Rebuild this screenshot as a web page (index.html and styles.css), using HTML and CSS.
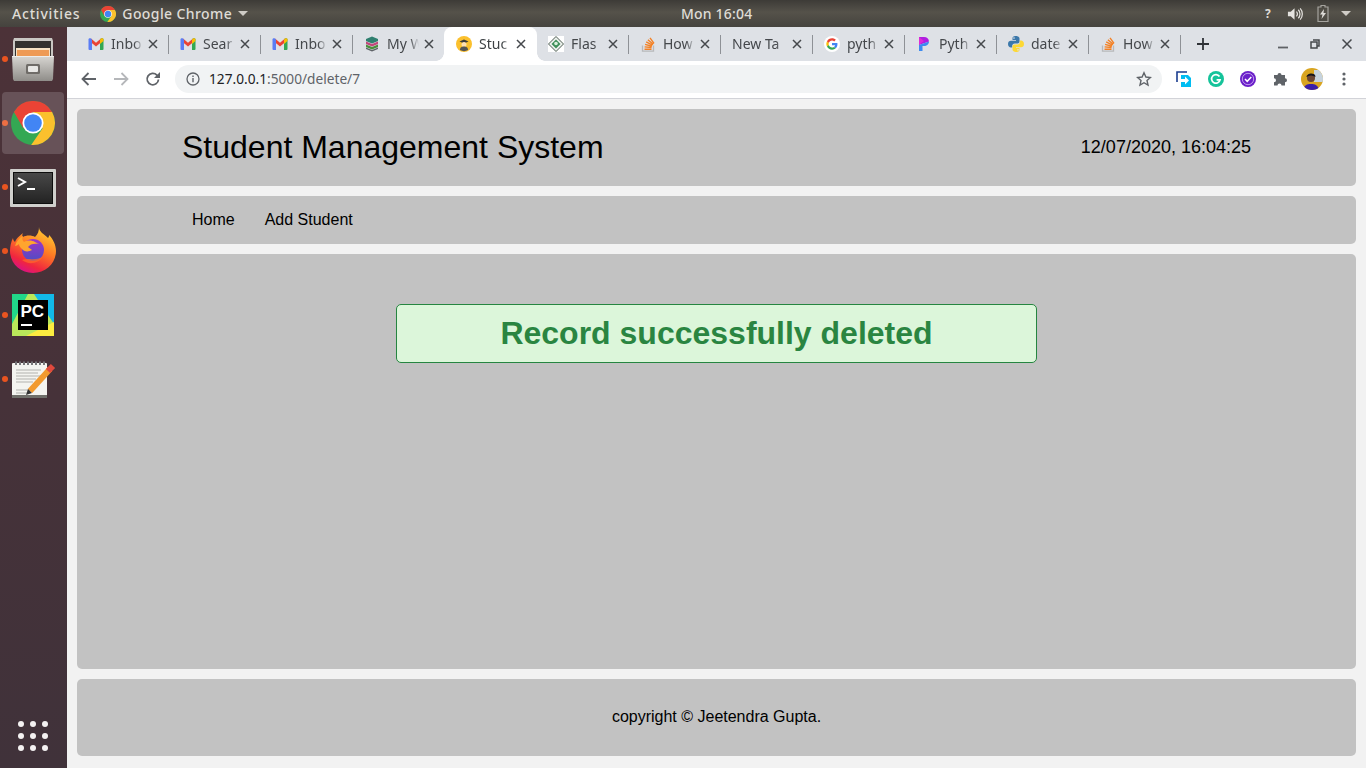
FILE: index.html
```html
<!DOCTYPE html>
<html lang="en">
<head>
    <meta charset="UTF-8">
    <title>Student Management System</title>
    <link rel="stylesheet" href="styles.css">
</head>
<body>
    <svg class="defs" width="0" height="0">
        <symbol id="chrome" viewBox="0 0 48 48">
            <circle cx="24" cy="24" r="24" fill="#34a853"/>
            <path d="M3.200 12A24 24 0 0 1 44.800 12H24L13.600 30Z" fill="#ea4335"/>
            <path d="M44.800 12A24 24 0 0 1 22 47.900L34.400 30 24 12Z" fill="#fbc02d"/>
            <circle cx="24" cy="24" r="11.500" fill="#fff"/>
            <circle cx="24" cy="24" r="9.600" fill="#4285f4"/>
        </symbol>
        <symbol id="gmail" viewBox="0 0 16 16">
            <path d="M3 2.600 8 6.800l5-4.200 1 3-6 5-6-5Z" fill="#ea4335"/>
            <path d="M.5 3.600C.5 2.400 2 2 3 2.600L4 3.500V14H1.500a1 1 0 0 1-1-1Z" fill="#5a7df5"/>
            <path d="M15.500 3.600C15.500 2.400 14 2 13 2.600L12 3.500V14h2.500a1 1 0 0 0 1-1Z" fill="#34a853"/>
            <path d="M12 3.500 13 2.600c1-.6 2.500-.2 2.500 1V5L12 7.900Z" fill="#fbbc05"/>
        </symbol>
        <symbol id="stack" viewBox="0 0 16 16">
            <path d="M2.500 9.500v5.700h11V9.500" fill="none" stroke="#b8b9bb" stroke-width="1.300"/>
            <path d="M4.500 13.200h7M4.600 10.900l7 .6M5.100 8.400l6.800 1.800M6.200 5.900l6.300 3.300M7.900 3.700l5.300 4.500M10 1.800l4 5.600" fill="none" stroke="#f48024" stroke-width="1.400"/>
        </symbol>
        <symbol id="close" viewBox="0 0 10 10">
            <path d="M1 1l8 8M9 1l-8 8" fill="none" stroke="#45484c" stroke-width="1.500"/>
        </symbol>
    </svg>

    <div class="topbar">
        <div class="topbar-left">
            <span class="activities">Activities</span>
            <svg class="topbar-chrome" width="16" height="16"><use href="#chrome"/></svg>
            <span>Google Chrome</span>
            <span class="caret"></span>
        </div>
        <div class="clock">Mon 16:04</div>
        <div class="topbar-right">
            <span class="help">?</span>
            <svg width="16" height="16" viewBox="0 0 17 16"><path d="M1 5.500h3L8 2v12l-4-3.500H1Z" fill="#e4e2de"/><path d="M10 5.500a3.500 3.500 0 0 1 0 5M12 3.500a6.500 6.500 0 0 1 0 9M14 2a9 9 0 0 1 0 12" fill="none" stroke="#e4e2de" stroke-width="1.300"/></svg>
            <svg width="12" height="17" viewBox="0 0 12 17"><path d="M4 .5h4v1.500h3v14.500H1V2h3Z" fill="none" stroke="#a5a39e" stroke-width="1.200"/><path d="M7 4 3 9.500h2.500L4.500 14 9 8H6.500Z" fill="#dedcd8"/></svg>
            <span class="caret"></span>
        </div>
    </div>

    <div class="desktop">
        <div class="dock">
            <div class="dock-item running">
                <svg width="42" height="44" viewBox="0 0 42 44">
                    <defs>
                        <linearGradient id="cabinet" x1="0" y1="0" x2="0" y2="1">
                            <stop offset="0" stop-color="#d8d6d2"/>
                            <stop offset="1" stop-color="#8f8d89"/>
                        </linearGradient>
                    </defs>
                    <path d="M2 1h38l1 3v15H1V4Z" fill="#c9c7c3"/>
                    <path d="M3 4h36v15H3Z" fill="#33312f"/>
                    <path d="M4 11h34v8H4Z" fill="#f6e1c4"/>
                    <path d="M5 13h32v6H5Z" fill="#ee9a55"/>
                    <path d="M0 19h42l-1 23-1 2H2l-1-2Z" fill="url(#cabinet)"/>
                    <path d="M0 19h42v1H0Z" fill="#eeedeb"/>
                    <rect x="14" y="27" width="14" height="10" rx="1.500" fill="#6f6c68"/>
                    <rect x="16" y="29" width="10" height="6" rx="1" fill="#e8e7e5"/>
                </svg>
            </div>
            <div class="dock-item running active">
                <svg width="44" height="44"><use href="#chrome"/></svg>
            </div>
            <div class="dock-item running terminal">
                <svg width="46" height="38" viewBox="0 0 46 38">
                    <defs>
                        <linearGradient id="term" x1="0" y1="0" x2="0" y2="1">
                            <stop offset="0" stop-color="#484848"/>
                            <stop offset="1" stop-color="#232323"/>
                        </linearGradient>
                    </defs>
                    <rect width="46" height="38" rx="1" fill="#cfcfcc"/>
                    <rect x="3" y="3" width="40" height="32" fill="#0d0d0d"/>
                    <rect x="4" y="4" width="38" height="30" fill="url(#term)"/>
                    <path d="M8 9l7 4-7 4" fill="none" stroke="#fff" stroke-width="2"/>
                    <path d="M17 20h8" stroke="#fff" stroke-width="2"/>
                </svg>
            </div>
            <div class="dock-item running firefox">
                <svg width="46" height="46" viewBox="0 0 46 46">
                    <defs>
                        <linearGradient id="fox" x1="0.800" y1="0" x2="0.300" y2="1">
                            <stop offset="0" stop-color="#ffd633"/>
                            <stop offset="0.450" stop-color="#ff7a24"/>
                            <stop offset="0.800" stop-color="#f0263f"/>
                            <stop offset="1" stop-color="#d9108a"/>
                        </linearGradient>
                        <linearGradient id="globe" x1="0.500" y1="0" x2="0.500" y2="1">
                            <stop offset="0" stop-color="#a033c8"/>
                            <stop offset="1" stop-color="#4f4dc4"/>
                        </linearGradient>
                    </defs>
                    <path d="M29 0c0 5 5 7 9 11 1-1 1-2 1-3 4 4 7 10 7 16 0 12-10 22-23 22S0 36 0 24c0-5 1-9 3-13 0 2 1 3 2 4 2-5 6-7 8-9-1 2-1 3 0 4 3-2 9-2 12 0 3-3 4-6 4-10Z" fill="url(#fox)"/>
                    <circle cx="23" cy="23" r="11" fill="url(#globe)"/>
                    <path d="M5 19c1-4 4-8 8-10-1 2-1 4 1 6 3-2 8-2 11 0 2 1 4 2 4 2-5-1-9 0-11 3 1 1 3 2 4 3-3 2-8 2-10-1-2-2-3-3-3-5-1 1-3 2-4 2Z" fill="#ffa52e"/>
                    <path d="M12 33c6 5 16 4 21-3-3 1-8 3-13 2-3 0-6 0-8 1Z" fill="#ff6a2a" opacity=".7"/>
                </svg>
            </div>
            <div class="dock-item running">
                <svg width="42" height="42" viewBox="0 0 42 42">
                    <rect width="42" height="42" fill="#21d789"/>
                    <path d="M16 0h26v42H0V30Z" fill="#b9e85a"/>
                    <path d="M22 0h20v30Z" fill="#12b9e8"/>
                    <path d="M42 28v14H14Z" fill="#fcec40"/>
                    <rect x="6" y="6" width="30" height="30"/>
                    <text class="pc-mark" x="8.500" y="23">PC</text>
                    <path d="M9 31h11" stroke="#fff" stroke-width="2"/>
                </svg>
            </div>
            <div class="dock-item running notepad">
                <svg width="46" height="38" viewBox="0 0 46 38">
                    <rect x="1" y="3" width="35" height="34" rx="1" fill="#f4f4f0"/>
                    <path d="M1 35h35v3H1Z" fill="#6f6f6a"/>
                    <path d="M5 5V1.500M9 5V1.500M13 5V1.500M17 5V1.500M21 5V1.500M25 5V1.500M29 5V1.500M33 5V1.500" stroke="#77777a" stroke-width="2"/>
                    <path d="M5 10h25M5 13h22M5 16h27M5 19h20M5 22h17M5 30h15M5 33h12" stroke="#b2b2ae"/>
                    <path d="M19 31 39 9" stroke="#f29a2e" stroke-width="6"/>
                    <path d="M37 11l5-5" stroke="#e0493d" stroke-width="6"/>
                    <path d="M15 35l2-6 4 4Z" fill="#333"/>
                </svg>
            </div>
            <div class="dock-item apps">
                <svg width="30" height="30" viewBox="0 0 30 30" fill="#f4f2f2">
                    <circle cx="3" cy="3" r="3"/><circle cx="15" cy="3" r="3"/><circle cx="27" cy="3" r="3"/>
                    <circle cx="3" cy="15" r="3"/><circle cx="15" cy="15" r="3"/><circle cx="27" cy="15" r="3"/>
                    <circle cx="3" cy="27" r="3"/><circle cx="15" cy="27" r="3"/><circle cx="27" cy="27" r="3"/>
                </svg>
            </div>
        </div>

        <div class="browser">
            <div class="tabstrip">
                <div class="tab"><svg class="favicon" width="16" height="16"><use href="#gmail"/></svg><span class="tab-title">Inbo</span><svg class="tab-close" width="10" height="10"><use href="#close"/></svg></div>
                <div class="tab"><svg class="favicon" width="16" height="16"><use href="#gmail"/></svg><span class="tab-title">Sear</span><svg class="tab-close" width="10" height="10"><use href="#close"/></svg></div>
                <div class="tab"><svg class="favicon" width="16" height="16"><use href="#gmail"/></svg><span class="tab-title">Inbo</span><svg class="tab-close" width="10" height="10"><use href="#close"/></svg></div>
                <div class="tab no-sep"><svg class="favicon" width="16" height="16" viewBox="0 0 16 16"><path d="M2 3l6-2.500L14 3v2L8 7.500 2 5Z" fill="#2f7f6f"/><path d="M2 5.500l6 2.500 6-2.500v2.500L8 10.500 2 8Z" fill="#c2477b"/><path d="M2 8.500l6 2.500 6-2.500v2.500L8 13.500 2 11Z" fill="#4a8f3c"/><path d="M2 11.500 8 14l6-2.500V13l-6 2.500L2 13Z" fill="#5f6368"/></svg><span class="tab-title">My W</span><svg class="tab-close" width="10" height="10"><use href="#close"/></svg></div>
                <div class="tab active"><svg class="favicon" width="16" height="16" viewBox="0 0 16 16"><circle cx="8" cy="8" r="8" fill="#fbc02d"/><path d="M3.500 5.500 8 3.500l4.500 2L8 7.500Z" fill="#3b3b3b"/><circle cx="8" cy="8.500" r="2.500" fill="#ffe0b2"/><path d="M4 14c0-3 2-3.500 4-3.500s4 .5 4 3.500a8 8 0 0 1-8 0Z" fill="#555"/></svg><span class="tab-title">Stuc</span><svg class="tab-close" width="10" height="10"><use href="#close"/></svg></div>
                <div class="tab"><svg class="favicon" width="16" height="16" viewBox="0 0 16 16"><rect width="16" height="16" fill="#fff"/><path d="M8 .5 15.500 8 8 15.500.5 8Z" fill="#eef2ee" stroke="#4b5b50"/><path d="M8 3.500 12.500 8 8 12.500 3.500 8Z" fill="#3f8f5a"/><circle cx="8" cy="7.500" r="1.800" fill="#d8efdc"/></svg><span class="tab-title">Flas</span><svg class="tab-close" width="10" height="10"><use href="#close"/></svg></div>
                <div class="tab"><svg class="favicon" width="16" height="16"><use href="#stack"/></svg><span class="tab-title">How</span><svg class="tab-close" width="10" height="10"><use href="#close"/></svg></div>
                <div class="tab"><span class="tab-title wide">New Ta</span><svg class="tab-close" width="10" height="10"><use href="#close"/></svg></div>
                <div class="tab"><svg class="favicon" width="16" height="16" viewBox="0 0 48 48"><circle cx="24" cy="24" r="24" fill="#fff"/><g transform="translate(7 7) scale(.71)"><path fill="#EA4335" d="M24 9.500c3.540 0 6.710 1.220 9.210 3.600l6.850-6.850C35.900 2.380 30.470 0 24 0 14.620 0 6.510 5.380 2.560 13.220l7.980 6.190C12.430 13.720 17.740 9.500 24 9.500z"/><path fill="#4285F4" d="M46.980 24.550c0-1.570-.15-3.090-.38-4.550H24v9.020h12.940c-.58 2.960-2.260 5.480-4.780 7.180l7.730 6c4.510-4.180 7.090-10.360 7.090-17.650z"/><path fill="#FBBC05" d="M10.530 28.590c-.48-1.450-.76-2.990-.76-4.590s.27-3.140.76-4.590l-7.980-6.190C.92 16.460 0 20.120 0 24c0 3.880.92 7.540 2.560 10.780l7.970-6.190z"/><path fill="#34A853" d="M24 48c6.480 0 11.930-2.130 15.890-5.810l-7.730-6c-2.150 1.450-4.920 2.300-8.160 2.300-6.260 0-11.570-4.220-13.470-9.910l-7.980 6.190C6.510 42.620 14.620 48 24 48z"/></g></svg><span class="tab-title">pyth</span><svg class="tab-close" width="10" height="10"><use href="#close"/></svg></div>
                <div class="tab"><svg class="favicon" width="16" height="16" viewBox="0 0 16 16"><path d="M3 1h5a5 5 0 0 1 5 4.500L3 9Z" fill="#b01fe0"/><path d="M3 9l10-3.500c0 2.500-2 4.500-5 4.500H6.500v5H3Z" fill="#3d8bf0"/><path d="M3 1l5 4-5 4Z" fill="#e02bd6"/></svg><span class="tab-title">Pyth</span><svg class="tab-close" width="10" height="10"><use href="#close"/></svg></div>
                <div class="tab"><svg class="favicon" width="16" height="16" viewBox="0 0 16 16"><path d="M8 0C5 0 4.500 1.300 4.500 2.500V4H8v.700H3C1.300 4.700 0 5.800 0 8s1.300 3.500 3 3.500h1.200V9.800c0-1.300 1.100-2.300 2.400-2.300h3c1 0 1.900-.9 1.900-2V2.500C11.500.9 10 0 8 0ZM6 1.300a.8.800 0 1 1 0 1.600.8.800 0 0 1 0-1.600Z" fill="#3c78aa"/><path d="M8 16c3 0 3.500-1.300 3.500-2.500V12H8v-.700h5c1.700 0 3-1.100 3-3.300s-1.300-3.500-3-3.500h-1.200v1.700c0 1.300-1.100 2.300-2.400 2.300h-3c-1 0-1.900.9-1.900 2v3C4.500 15.100 6 16 8 16Zm2-1.300a.8.800 0 1 1 0-1.600.8.800 0 0 1 0 1.600Z" fill="#fdd835"/></svg><span class="tab-title">date</span><svg class="tab-close" width="10" height="10"><use href="#close"/></svg></div>
                <div class="tab"><svg class="favicon" width="16" height="16"><use href="#stack"/></svg><span class="tab-title">How</span><svg class="tab-close" width="10" height="10"><use href="#close"/></svg></div>
                <svg class="new-tab" width="12" height="12" viewBox="0 0 12 12"><path d="M6 0v12M0 6h12" stroke="#2f3237" stroke-width="1.800"/></svg>
                <div class="win-controls">
                    <svg width="10" height="10" viewBox="0 0 10 10"><path d="M0 8.500h10" stroke="#5f6266" stroke-width="1.800"/></svg>
                    <svg width="10" height="10" viewBox="0 0 10 10"><path d="M3 1h6v6H7M1 3h6v6H1Z" fill="none" stroke="#45484c" stroke-width="1.500"/></svg>
                    <svg width="10" height="10" viewBox="0 0 10 10"><path d="M.5.500l9 9M9.500.500l-9 9" stroke="#45484c" stroke-width="1.500"/></svg>
                </div>
            </div>

            <div class="toolbar">
                <div class="tool-btn"><svg width="16" height="14" viewBox="0 0 16 14"><path d="M15 7H2M7.500 1 1.500 7l6 6" fill="none" stroke="#5f6368" stroke-width="1.800"/></svg></div>
                <div class="tool-btn"><svg width="16" height="14" viewBox="0 0 16 14"><path d="M1 7h13M8.500 1l6 6-6 6" fill="none" stroke="#b5b7ba" stroke-width="1.800"/></svg></div>
                <div class="tool-btn"><svg width="16" height="16" viewBox="0 0 16 16"><path d="M13.500 8.500a5.700 5.700 0 1 1-1.600-4.400L14 6" fill="none" stroke="#5f6368" stroke-width="1.800"/><path d="M15 1v6H9Z" fill="#5f6368"/></svg></div>
                <div class="omnibox">
                    <svg width="14" height="14" viewBox="0 0 14 14"><circle cx="7" cy="7" r="6" fill="none" stroke="#5f6368" stroke-width="1.300"/><path d="M7 6v4.300M7 3.500v1.400" stroke="#5f6368" stroke-width="1.400"/></svg>
                    <span class="url"><b>127.0.0.1</b>:5000/delete/7</span>
                    <svg class="star" width="16" height="16" viewBox="0 0 16 16"><path d="M8 1.800l1.900 4.200 4.500.5-3.400 3 1 4.500L8 11.700 4 14l1-4.500-3.400-3 4.500-.5Z" fill="none" stroke="#5f6368" stroke-width="1.400"/></svg>
                </div>
                <div class="extensions">
                    <div class="tool-btn"><svg width="16" height="16" viewBox="0 0 16 16"><path d="M11 1H1v10" fill="none" stroke="#1b3d8f" stroke-width="1.600"/><path d="M5 4h7l3 3v9H5Z" fill="#00bdf2"/><path d="M5 8h4V5.500L13 9.500l-4 4V11H5Z" fill="#fff"/></svg></div>
                    <div class="tool-btn"><svg width="16" height="16" viewBox="0 0 16 16"><circle cx="8" cy="8" r="8" fill="#15c39a"/><path d="M11.500 5.500a4.300 4.300 0 1 0 .6 3.300H8.600" fill="none" stroke="#fff" stroke-width="1.700"/></svg></div>
                    <div class="tool-btn"><svg width="16" height="16" viewBox="0 0 16 16"><circle cx="8" cy="8" r="8" fill="#6a1fc9"/><circle cx="8" cy="8" r="5.700" fill="none" stroke="#d6b8f5" stroke-width=".8"/><path d="M5 8l2.200 2.300L11.300 6" fill="none" stroke="#fff" stroke-width="1.500"/></svg></div>
                    <div class="tool-btn"><svg width="16" height="16" viewBox="0 0 16 16"><path d="M1 5h3.500a2 2 0 1 1 4 0H12v3.200a2 2 0 1 1 0 4V15.500H8.500a2 2 0 1 0-4 0H1v-3.300a2 2 0 1 0 0-4Z" fill="#5f6368" transform="translate(1 -1)"/></svg></div>
                    <div class="tool-btn"><svg width="22" height="22" viewBox="0 0 22 22"><defs><clipPath id="avatar"><circle cx="11" cy="11" r="11"/></clipPath></defs><g clip-path="url(#avatar)"><rect width="22" height="22" fill="#d9a520"/><rect x="13" y="2" width="9" height="12" fill="#c7d3dd"/><path d="M2 22c1-5 4-6 8-6s7 1 8 6Z" fill="#3a1fa8"/><circle cx="10" cy="10" r="4" fill="#6b4632"/><path d="M5.500 9c0-4 9-5 9 0-3-2-6-2-9 0Z" fill="#16151c"/></g></svg></div>
                    <div class="tool-btn"><svg width="4" height="14" viewBox="0 0 4 14" fill="#5f6368"><circle cx="2" cy="2" r="1.600"/><circle cx="2" cy="7" r="1.600"/><circle cx="2" cy="12" r="1.600"/></svg></div>
                </div>
            </div>

            <div class="page">
                <header class="card header">
                    <h1>Student Management System</h1>
                    <span class="datetime">12/07/2020, 16:04:25</span>
                </header>
                <nav class="card nav">
                    <a href="#">Home</a>
                    <a href="#">Add Student</a>
                </nav>
                <main class="card content">
                    <div class="alert-success">Record successfully deleted</div>
                </main>
                <footer class="card footer">copyright © Jeetendra Gupta.</footer>
            </div>
        </div>
    </div>
</body>
</html>
```

FILE: styles.css
```css
* {
    box-sizing: border-box;
}
html, body {
    height: 100%;
}
body {
    margin: 0;
    overflow: hidden;
    display: flex;
    flex-direction: column;
    font-family: "Liberation Sans", Arial, sans-serif;
}
.defs {
    position: absolute;
}

/* ubuntu top bar */
.topbar {
    height: 27px;
    flex: none;
    display: flex;
    align-items: center;
    position: relative;
    padding: 0 15px 0 12px;
    background: linear-gradient(#3d3b37, #55524a 45%, #45433e);
    color: #dfdcd6;
    font: 500 14px "Noto Sans", sans-serif;
    letter-spacing: 0.4px;
}
.topbar-left {
    display: flex;
    align-items: center;
}
.activities {
    margin-right: 20px;
    letter-spacing: 0.8px;
}
.topbar-chrome {
    margin-right: 6px;
}
.caret {
    display: inline-block;
    width: 0;
    height: 0;
    margin-left: 6px;
    border-left: 5px solid transparent;
    border-right: 5px solid transparent;
    border-top: 5px solid #cfccc6;
}
.clock {
    position: absolute;
    left: 681px;
    letter-spacing: 0.2px;
}
.topbar-right {
    margin-left: auto;
    display: flex;
    align-items: center;
    gap: 14px;
}
.topbar-right .caret {
    margin-left: -2px;
}
.help {
    margin-right: 2px;
    font-size: 12px;
    font-weight: 700;
}

.desktop {
    flex: 1;
    display: flex;
    min-height: 0;
}

/* dock */
.dock {
    width: 67px;
    flex: none;
    display: flex;
    flex-direction: column;
    background: linear-gradient(#4c3238, #40323a);
}
.dock-item {
    height: 64px;
    padding-right: 1px;
    display: flex;
    align-items: center;
    justify-content: center;
    position: relative;
}
.dock-item svg {
    display: block;
}
.dock-item.running::before {
    content: "";
    position: absolute;
    left: 2px;
    top: 29px;
    width: 6px;
    height: 6px;
    border-radius: 50%;
    background: #e95420;
}
.dock-item.active::after {
    content: "";
    position: absolute;
    left: 2px;
    top: 1px;
    width: 62px;
    height: 62px;
    border-radius: 4px;
    background: rgba(255, 255, 255, 0.16);
}
.dock-item.active svg {
    position: relative;
    z-index: 1;
}
.terminal svg {
    margin-top: 2px;
}
.firefox svg {
    margin-top: -2px;
}
.notepad svg {
    margin-left: 1px;
}
.pc-mark {
    fill: #fff;
    font: 700 17px "Liberation Sans", sans-serif;
}
.apps {
    margin-top: auto;
}

/* chrome window */
.browser {
    flex: 1;
    min-width: 0;
    display: flex;
    flex-direction: column;
}
.tabstrip {
    height: 34px;
    flex: none;
    display: flex;
    align-items: center;
    padding-left: 10px;
    background: #dee1e6;
}
.tab {
    width: 92px;
    height: 34px;
    flex: none;
    display: flex;
    align-items: center;
    position: relative;
    padding-left: 11px;
    color: #45484c;
    font: 14px "Noto Sans", sans-serif;
}
.tab::after {
    content: "";
    position: absolute;
    right: 0;
    top: 8px;
    width: 1px;
    height: 19px;
    background: #8e9196;
}
.tab.no-sep::after {
    display: none;
}
.tab.active {
    width: 93px;
    margin-left: -1px;
    padding-left: 12px;
    background: #fff;
    border-radius: 8px 8px 0 0;
    color: #3c4043;
}
/* the little curved feet of the open tab */
.tab.active::before,
.tab.active::after {
    content: "";
    display: block;
    position: absolute;
    top: auto;
    bottom: 0;
    width: 8px;
    height: 8px;
}
.tab.active::before {
    left: -8px;
    background: radial-gradient(circle at 0 0, transparent 7.500px, #fff 8px);
}
.tab.active::after {
    right: -8px;
    background: radial-gradient(circle at 100% 0, transparent 7.500px, #fff 8px);
}
.favicon {
    flex: none;
    margin-right: 7px;
}
.tab-title {
    width: 32px;
    margin-top: -2px;
    white-space: nowrap;
    -webkit-mask-image: linear-gradient(90deg, #000 72%, transparent);
    mask-image: linear-gradient(90deg, #000 72%, transparent);
}
.tab-title.wide {
    width: 55px;
    -webkit-mask-image: linear-gradient(90deg, #000 80%, transparent);
    mask-image: linear-gradient(90deg, #000 80%, transparent);
}
.tab-close {
    position: absolute;
    left: 71px;
    top: 12px;
}
.tab.active .tab-close {
    left: 72px;
}
.new-tab {
    margin-left: 16px;
}
.win-controls {
    margin-left: auto;
    display: flex;
    gap: 22px;
    padding-right: 14px;
}

.toolbar {
    height: 38px;
    flex: none;
    display: flex;
    align-items: center;
    padding: 0 6px 1px 6px;
    background: #fff;
    border-bottom: 1px solid #d2d3d8;
}
.tool-btn {
    width: 32px;
    height: 28px;
    flex: none;
    display: flex;
    align-items: center;
    justify-content: center;
}
.omnibox {
    flex: 1;
    height: 28px;
    margin: 0 6px;
    padding: 0 10px 0 11px;
    display: flex;
    align-items: center;
    border-radius: 14px;
    background: #f1f3f4;
}
.url {
    margin-left: 9px;
    margin-top: -2px;
    color: #5f6368;
    font: 13.700px "Noto Sans", sans-serif;
}
.url b {
    color: #202124;
    font-weight: 400;
}
.star {
    margin-left: auto;
}
.extensions {
    display: flex;
}

/* the page itself */
.page {
    flex: 1;
    min-height: 0;
    display: flex;
    flex-direction: column;
    gap: 10px;
    padding: 10px;
    background: #f2f2f2;
}
.card {
    background: #c2c2c2;
    border-radius: 5px;
}
.header {
    height: 77px;
    flex: none;
    display: flex;
    align-items: center;
    justify-content: space-between;
    padding: 0 105px;
}
h1 {
    margin: 0;
    font-size: 32px;
    font-weight: 400;
    color: #000;
}
.datetime {
    font-size: 18px;
    color: #000;
}
.nav {
    height: 48px;
    flex: none;
    display: flex;
    align-items: center;
    padding-left: 105px;
}
.nav a {
    padding: 0 10px;
    margin-right: 10px;
    color: #000;
    font-size: 16px;
    text-decoration: none;
}
.content {
    height: 415px;
    flex: none;
    padding-top: 50px;
}
.alert-success {
    width: 641px;
    height: 59px;
    margin: 0 auto;
    display: flex;
    align-items: center;
    justify-content: center;
    border: 1px solid #258540;
    border-radius: 5px;
    background: #dcf6da;
    color: #2a8541;
    font-size: 32px;
    font-weight: 700;
}
.footer {
    height: 77px;
    flex: none;
    padding-bottom: 2px;
    display: flex;
    align-items: center;
    justify-content: center;
    color: #000;
    font-size: 16px;
}
```
